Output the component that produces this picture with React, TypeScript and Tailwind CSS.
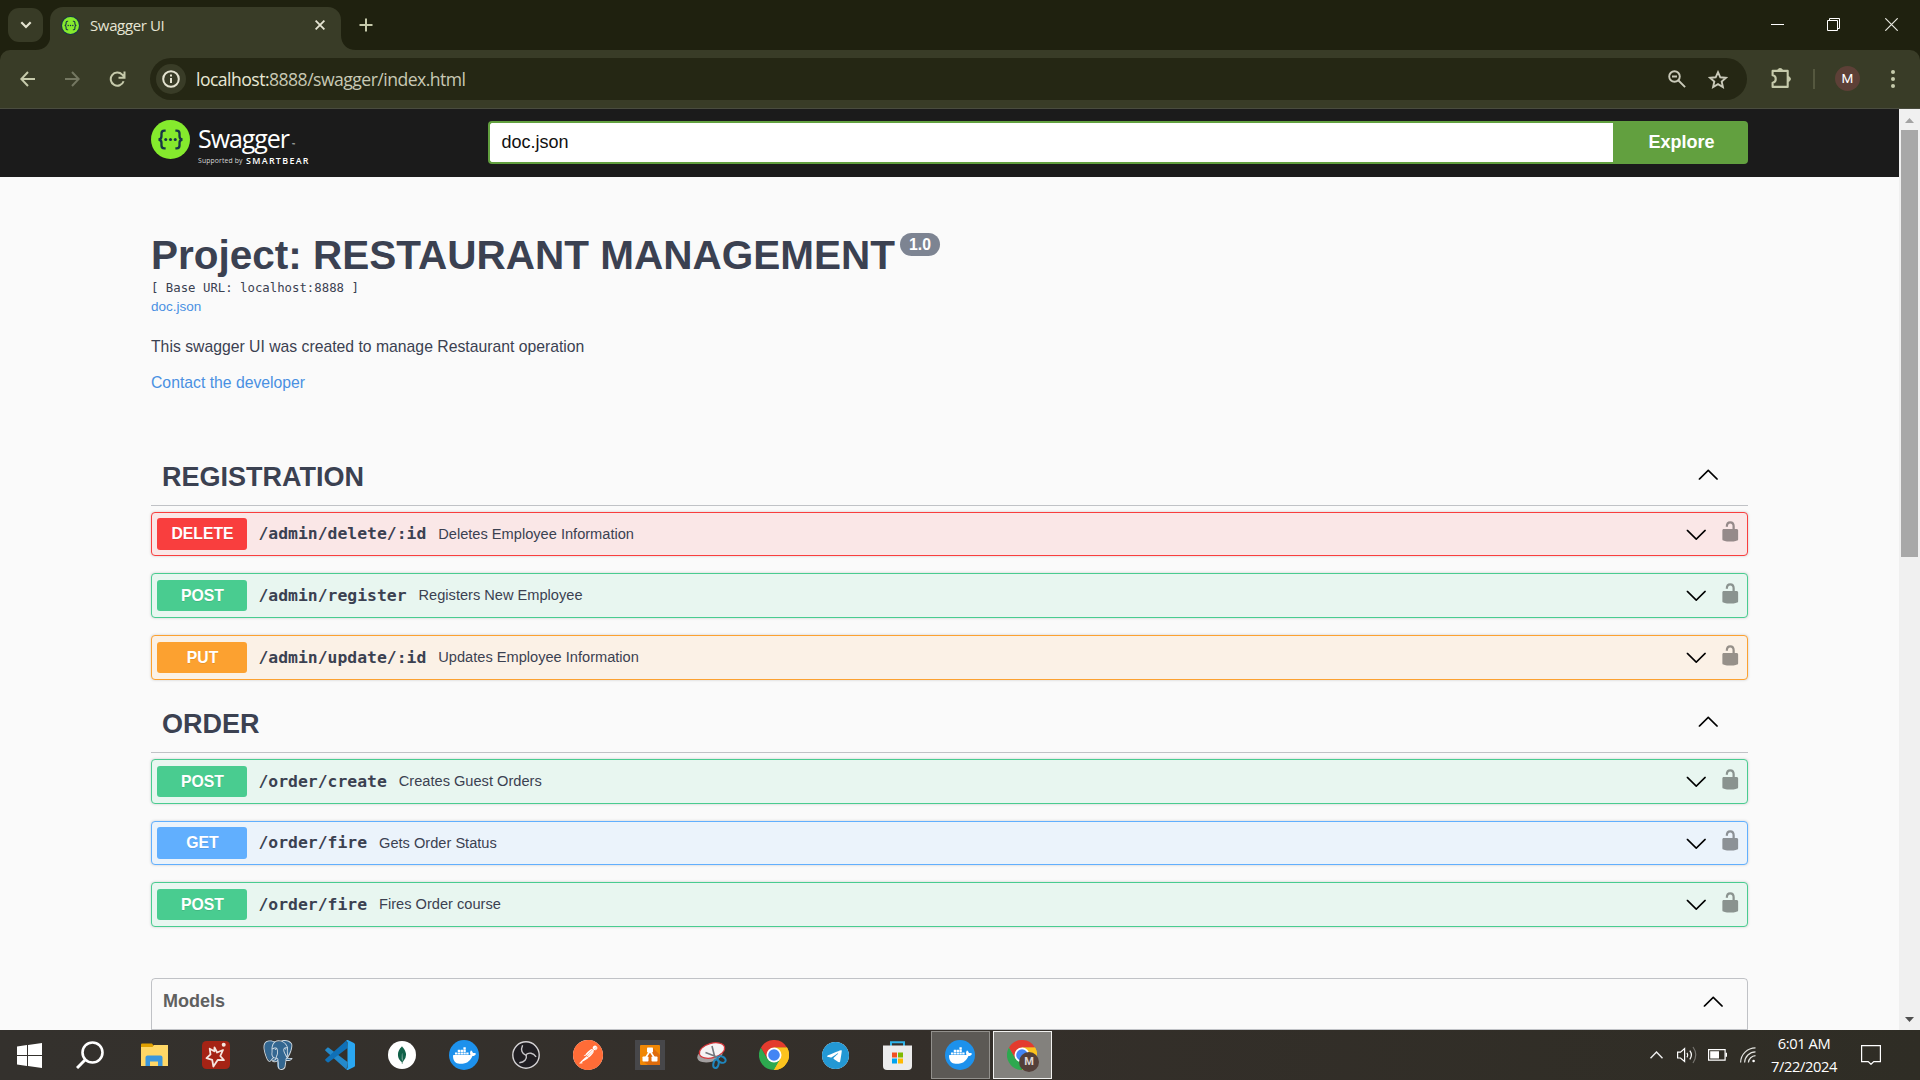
import React from "react";
import { SiPostgresql, SiMongodb, SiDocker, SiPostman, SiTelegram } from "react-icons/si";

const ARROW =
  "M17.418 6.109c.272-.268.709-.268.979 0s.271.701 0 .969l-7.908 7.83c-.27.268-.707.268-.979 0l-7.908-7.83c-.27-.268-.27-.701 0-.969s.709-.268.979 0L10 13.25l7.418-7.141z";
const UNLOCKED =
  "M15.8 8H14V5.6C14 2.703 12.665 1 10 1 7.334 1 6 2.703 6 5.6V6h2v-.801C8 3.754 8.797 3 10 3c1.203 0 2 .754 2 2.199V8H4c-.553 0-1 .646-1 1.199V17c0 .549.428 1.139.951 1.307l1.197.387C5.672 18.861 6.55 19 7.1 19h5.8c.549 0 1.428-.139 1.951-.307l1.196-.387c.524-.167.953-.757.953-1.306V9.199C17 8.646 16.352 8 15.8 8z";

function Arrow({ up = false, className = "" }: { up?: boolean; className?: string }) {
  return (
    <svg viewBox="0 0 20 20" className={`size-[22.5px] shrink-0 ${className}`}>
      <path d={ARROW} transform={up ? "rotate(180 10 10)" : undefined} />
    </svg>
  );
}

/* ---------- Browser chrome ---------- */

function Braces({ r = 32 }: { r?: number }) {
  return (
    <>
      <circle cx="32" cy="32" r={r} fill="#85ea2d" />
      <g fill="none" stroke="#173647" strokeWidth="3.8">
        <path d="M24 17.5h-2.2c-3.3 0-4.6 1.8-4.6 4.8v4.2c0 3.6-1.2 5-4.7 5.5 3.5.5 4.7 1.9 4.7 5.5v4.2c0 3 1.3 4.8 4.6 4.8H24" />
        <path d="M40 17.5h2.2c3.3 0 4.6 1.8 4.6 4.8v4.2c0 3.6 1.2 5 4.7 5.5-3.5.5-4.7 1.9-4.7 5.5v4.2c0 3-1.3 4.8-4.6 4.8H40" />
      </g>
      <g fill="#173647">
        <circle cx="24.2" cy="32" r="2.5" />
        <circle cx="32" cy="32" r="2.5" />
        <circle cx="39.8" cy="32" r="2.5" />
      </g>
    </>
  );
}

function TabStrip() {
  return (
    <div className="flex h-[50px] w-full bg-[#1f210f]">
      <div className="ml-2 mt-2 flex h-[34px] w-[35px] items-center justify-center rounded-[11px] bg-[#383b26]">
        <svg viewBox="0 0 12 8" className="h-2 w-3" fill="none" stroke="#e4e3d0" strokeWidth="2.2">
          <path d="M1.3 1.3 6 6l4.7-4.7" />
        </svg>
      </div>
      <svg viewBox="0 0 15 15" className="-mr-px mt-[35px] h-[15px] w-4 -ml-2 self-start" fill="#393c27">
        <path d="M15 0v15H0C9 15 15 9 15 0z" />
      </svg>
      <div className="mt-[7px] flex h-[43px] w-[291px] items-center rounded-t-[13px] bg-[#393c27]">
        <svg viewBox="0 0 64 64" className="-mt-[7px] ml-[10.5px] size-[19px]">
          <circle cx="32" cy="32" r="32" fill="#173647" />
          <Braces r={28.5} />
        </svg>
        <span className="-mt-[6px] ml-[10.5px] w-[225px] whitespace-nowrap font-['Open_Sans'] text-[15px] tracking-[-0.36px] text-[#e6e5d4]">
          Swagger UI
        </span>
        <svg viewBox="0 0 10 10" className="-mt-[7px] mr-[15px] size-2.5 shrink-0" stroke="#e6e5d4" strokeWidth="1.8">
          <path d="m.6.6 8.8 8.8M9.4.6.6 9.4" />
        </svg>
      </div>
      <svg viewBox="0 0 15 15" className="mt-[35px] size-[15px] self-start" fill="#393c27">
        <path d="M0 0v15h15C6 15 0 9 0 0z" />
      </svg>
      <svg viewBox="0 0 14 14" className="ml-[2.5px] mt-[18px] size-3.5" stroke="#c6caab" strokeWidth="2">
        <path d="M7 .5v13M.5 7h13" />
      </svg>
      <div className="ml-auto flex h-[50px] items-center">
        <svg viewBox="0 0 13 13" className="-mt-px mr-[43px] size-[13px]" stroke="#fff">
          <path d="M0 6.5h13" />
        </svg>
        <svg viewBox="0 0 13 13" className="-mt-px mr-[45px] size-[13px]" fill="none" stroke="#fff">
          <path d="M.5 2.5h10v10H.5zM2.5 2.5v-2h10v10h-2" />
        </svg>
        <svg viewBox="0 0 13 13" className="-mt-px mr-[22px] size-[13px]" stroke="#e8e8e0" strokeWidth="1.2">
          <path d="m.3.3 12.4 12.4M12.7.3.3 12.7" />
        </svg>
      </div>
    </div>
  );
}

function Toolbar() {
  return (
    <div className="w-full bg-[#1f210f]">
      <div className="flex h-[59px] items-start rounded-t-[10px] border-b border-[#4a4c3f] bg-[#393c27]">
        <svg viewBox="0 0 16 16" className="ml-5 mt-[21px] size-4 shrink-0" fill="none" stroke="#c6caab" strokeWidth="2">
          <path d="M15 8H2M8 1 1.3 8 8 15" />
        </svg>
        <svg viewBox="0 0 16 16" className="ml-7 mt-[21px] size-4 shrink-0" fill="none" stroke="#747761" strokeWidth="2">
          <path d="M1 8h13M8 1l6.7 7L8 15" />
        </svg>
        <svg viewBox="0 0 17 16" className="ml-[29px] mt-[21px] h-4 w-[17px] shrink-0" fill="none" stroke="#c6caab" strokeWidth="2">
          <path d="M14.6 10.2A6.6 6.6 0 1 1 13.2 3.6L15 5.5M15.5.5v6.2H9.5" />
        </svg>
        <div className="ml-6 mt-2 flex h-[42px] w-[1597px] items-center rounded-full bg-[#252714]">
          <div className="ml-1.5 flex size-[30px] items-center justify-center rounded-full bg-[#393c27]">
            <svg viewBox="0 0 18 18" className="size-[18px]" fill="none" stroke="#e4e3d0" strokeWidth="2">
              <circle cx="9" cy="9" r="7.8" />
              <path d="M9 8v5M9 4.5v2" />
            </svg>
          </div>
          <span className="ml-2.5 whitespace-nowrap font-['Open_Sans'] text-[17.6px] tracking-[-0.53px] text-[#c8c9b4]">
            <span className="text-[#e8e7d5]">localhost:</span>8888/swagger/index.html
          </span>
          <svg viewBox="0 0 18 18" className="ml-auto mr-[22px] size-[18px]" fill="none" stroke="#c9c9b9" strokeWidth="1.9">
            <circle cx="6.5" cy="6.5" r="5.3" />
            <path d="m10.5 10.5 6.6 6.6M4 6.5h5" />
          </svg>
          <svg viewBox="0 0 20 19" className="mr-[19px] h-[19px] w-5" fill="none" stroke="#c9c9b9" strokeWidth="1.9">
            <path d="m10 2.2 2.3 5.1 5.6.5-4.2 3.7 1.2 5.5L10 14.1 5.1 17l1.2-5.5-4.2-3.7 5.6-.5z" />
          </svg>
        </div>
        <svg viewBox="0 0 21 20" className="ml-6 mt-[18px] h-5 w-[21px] shrink-0">
          <path
            d="M2.3 2.9h14.4v16H1.6v-4.2c4.2-.4 4.2-6.9 0-7.4V2.9z"
            fill="none"
            stroke="#c6caab"
            strokeWidth="2.1"
            strokeLinejoin="round"
          />
          <path d="M6.6 3a2.5 2.5 0 0 1 5 0zM17.5 8.5a2.6 2.6 0 0 1 0 5z" fill="#c6caab" stroke="#c6caab" />
        </svg>
        <div className="ml-[21px] mt-[19px] h-5 w-0.5 bg-[#55583f]" />
        <div className="ml-5 mt-4 flex size-[25px] items-center justify-center rounded-full bg-[#5d4037] font-['Roboto'] text-[13.5px] text-white">
          M
        </div>
        <svg viewBox="0 0 4 18" className="ml-[30.5px] mt-5 h-[18px] w-1" fill="#c6caab">
          <circle cx="2" cy="2" r="2" />
          <circle cx="2" cy="9" r="2" />
          <circle cx="2" cy="16" r="2" />
        </svg>
      </div>
    </div>
  );
}

/* ---------- Swagger page ---------- */

function TopBar() {
  return (
    <div className="flex h-[68px] items-start bg-[#1b1b1b] pl-[151px]">
      <svg viewBox="0 0 64 64" className="mt-[11px] size-[39px] shrink-0">
        <Braces />
      </svg>
      <div className="ml-2 mt-[11px] w-[290px] whitespace-nowrap font-['Open_Sans'] text-white">
        <div className="flex h-9 items-center text-[25px] font-normal leading-9 tracking-[-1.05px]">
          Swagger<span className="ml-[3px] mt-3.5 text-[4px] leading-none tracking-normal">™</span>
        </div>
        <div className="-mt-px flex h-3 items-center">
          <span className="w-12 text-[6.8px] leading-3 tracking-[0.15px] text-[#d8d8d8]">Supported by</span>
          <span className="text-[8.9px] font-semibold leading-3 tracking-[1.32px]">SMARTBEAR</span>
        </div>
      </div>
      <div className="mt-3 flex h-[43px] w-[1125px] items-center rounded-l border-2 border-r-0 border-[#62a03f] bg-white pl-[11.5px] text-[18px] leading-none text-[#111]">
        <span className="-mt-0.5">doc.json</span>
      </div>
      <div className="mt-3 flex h-[43px] w-[135px] items-center justify-center rounded-r bg-[#62a03f] text-[18px] font-bold leading-none text-white">
        <span className="-mt-0.5 ml-0.5">Explore</span>
      </div>
    </div>
  );
}

type Op = { method: string; path: string; summary: string; box: string; badge: string };

const RED = "h-11 border-[#f93e3e] bg-[#fae7e7]";
const GREEN = "h-[45px] border-[#49cc90] bg-[#e8f6f0]";
const ORANGE = "h-[45px] border-[#fca130] bg-[#fbf1e6]";
const BLUE = "h-11 border-[#61affe] bg-[#ebf3fb]";

const REGISTRATION: Op[] = [
  { method: "DELETE", path: "/admin/delete/:id", summary: "Deletes Employee Information", box: RED, badge: "h-8 bg-[#f93e3e]" },
  { method: "POST", path: "/admin/register", summary: "Registers New Employee", box: GREEN, badge: "h-[31px] bg-[#49cc90]" },
  { method: "PUT", path: "/admin/update/:id", summary: "Updates Employee Information", box: ORANGE, badge: "h-[31px] bg-[#fca130]" },
];
const ORDER: Op[] = [
  { method: "POST", path: "/order/create", summary: "Creates Guest Orders", box: GREEN, badge: "h-[31px] bg-[#49cc90]" },
  { method: "GET", path: "/order/fire", summary: "Gets Order Status", box: BLUE, badge: "h-8 bg-[#61affe]" },
  { method: "POST", path: "/order/fire", summary: "Fires Order course", box: GREEN, badge: "h-[31px] bg-[#49cc90]" },
];

function Section({ name, ops }: { name: string; ops: Op[] }) {
  return (
    <section>
      <div className="flex h-[57px] items-center justify-between border-b border-[#3b4151]/30 pl-[11px] pr-[29px]">
        <h3 className="text-[27px] font-bold leading-none">{name}</h3>
        <Arrow up className="-mt-1" />
      </div>
      <div className="mt-1.5 flex flex-col gap-[17px]">
        {ops.map((op) => (
          <div
            key={op.method + op.path}
            className={`flex items-center rounded border pl-[5px] shadow-[0_0_3px_rgba(0,0,0,0.19)] ${op.box}`}
          >
            <div
              className={`flex w-[90px] items-center justify-center rounded-[3px] text-[15.75px] font-bold leading-none text-white [text-shadow:0_1px_0_rgba(0,0,0,0.1)] ${op.badge}`}
            >
              <span className="ml-px">{op.method}</span>
            </div>
            <span className="ml-[11.5px] mt-px font-['DejaVu_Sans_Mono'] text-[16.4px] font-bold leading-none">{op.path}</span>
            <span className="ml-3 text-[14.625px] leading-none">{op.summary}</span>
            <Arrow className="ml-auto mr-[11px]" />
            <svg viewBox="0 0 20 20" className="-mt-[5px] mr-1.5 size-[22.5px] shrink-0 opacity-40">
              <path d={UNLOCKED} />
            </svg>
          </div>
        ))}
      </div>
    </section>
  );
}

function Page() {
  return (
    <div className="flex h-[921px] w-full overflow-hidden">
      <div className="h-full w-[1899px] bg-[#fafafa]">
        <TopBar />
        <main className="mx-[151px] w-[1597px] whitespace-nowrap pt-14 text-[#3b4151]">
          <div className="flex h-[46px] items-start">
            <h2 className="-mt-px text-[40.5px] font-bold leading-[46px]">Project: RESTAURANT MANAGEMENT</h2>
            <span className="ml-[5px] flex h-[23px] w-10 items-center justify-center rounded-full bg-[#7d8492] text-[15.75px] font-bold leading-none text-white">
              1.0
            </span>
          </div>
          <div className="h-[17px] font-['DejaVu_Sans_Mono'] text-[12.33px] leading-[19px]">[ Base URL: localhost:8888 ]</div>
          <div className="h-5 text-[13.5px] leading-[21px] text-[#4990e2]">doc.json</div>
          <p className="mt-5 text-[15.75px] leading-[21px]">This swagger UI was created to manage Restaurant operation</p>
          <p className="mt-[15px] text-[15.75px] leading-[21px] text-[#4990e2]">Contact the developer</p>
          <div className="mt-14">
            <Section name="REGISTRATION" ops={REGISTRATION} />
          </div>
          <div className="mt-4">
            <Section name="ORDER" ops={ORDER} />
          </div>
          <div className="mt-[51px] h-20 rounded border border-[#3b4151]/30">
            <div className="flex h-[51px] items-center justify-between border-b border-[#3b4151]/30 pb-1 pl-[11px] pr-[23px]">
              <h4 className="-mt-0.5 text-[18px] font-bold leading-none text-[#606060]">Models</h4>
              <Arrow up />
            </div>
          </div>
        </main>
      </div>
      <div className="flex h-full w-[21px] flex-col items-center bg-[#f0f0f0]">
        <svg viewBox="0 0 9 5" className="mt-[9px] h-[5px] w-[9px]" fill="#a3a3a3">
          <path d="M0 5 4.5 0 9 5z" />
        </svg>
        <div className="mt-[7px] h-[427px] w-[17px] bg-[#a8a8a8]" />
        <svg viewBox="0 0 9 5" className="mb-2 mt-auto h-[5px] w-[9px]" fill="#505050">
          <path d="M0 0h9L4.5 5z" />
        </svg>
      </div>
    </div>
  );
}

/* ---------- Taskbar ---------- */

function Docker() {
  return (
    <div className="flex size-[30px] items-center justify-center rounded-full bg-[#1d91ec] text-white">
      <SiDocker className="size-[23px]" />
    </div>
  );
}

function Chrome() {
  return (
    <svg viewBox="0 0 48 48" className="size-[30px]">
      <path d="M24 24V12h20.8A24 24 0 0 1 24 48z" fill="#fcc31e" />
      <path d="M3.2 12A24 24 0 0 0 24 48l10.4-18L24 24l-10.4 6z" fill="#2da94f" />
      <path d="M3.2 12A24 24 0 0 1 44.8 12H24v12l-10.4 6z" fill="#e33b2e" />
      <path d="M34.4 30 24 48a24 24 0 0 0 20.8-36H24z" fill="#fcc31e" />
      <circle cx="24" cy="24" r="12" fill="#fff" />
      <circle cx="24" cy="24" r="9.3" fill="#4285f4" />
    </svg>
  );
}

const APPS: { id: string; icon: React.ReactNode }[] = [
  {
    id: "explorer",
    icon: (
      <svg viewBox="0 0 27 24" className="h-6 w-[27px]">
        <path d="M0 1.5Q0 .5 1 .5h10l1.5 2H27V10H0z" fill="#e0a000" />
        <path d="M0 4h11.5L13 2h14v21H0z" fill="#ffd766" />
        <path d="M4.5 23V14.5a2 2 0 0 1 2-2h13a2 2 0 0 1 2 2V23H17v-4.5H9V23z" fill="#3b97dd" />
      </svg>
    ),
  },
  {
    id: "star",
    icon: (
      <svg viewBox="0 0 28 28" className="size-7">
        <rect width="28" height="28" rx="4.5" fill="#a52315" />
        <path
          d="m12.5 6.5 2.6 5 5.9-2.5-2.7 6 3.6 4.2-6.2-.2-4.3 6.5-1.2-6.7-5.7-1.6 4-3.9-.8-5.6 4.6 2.5z"
          fill="none"
          stroke="#f5e6e0"
          strokeWidth="1.8"
          strokeLinejoin="round"
        />
        <circle cx="21.7" cy="3.7" r="2" fill="#f5e6e0" />
      </svg>
    ),
  },
  {
    id: "postgres",
    icon: (
      <svg viewBox="0 0 24 24" className="size-[30px]">
        <path
          d="M5 .8c3-.4 4.5.4 5.5.9C12 1 13.5.8 15 1.2c3-1 6.5-.6 7.7 1.8.9 2.4-.8 7.5-3.2 11 1.2.6 2.6.3 3.7.4-.6 1.5-3 2.2-5.3 1.9-.2 2 .2 6.2-3.4 6.7-3.3.4-3.3-2.5-3.4-6.2-1.6.2-3.5 0-3.6-1C5.5 18 3.8 15.5 2.7 12.5 1.5 9.5.6 5.5 1.2 3.3 1.7 1.8 3 1 5 .8z"
          fill="#336791"
        />
        <SiPostgresql size={24} className="text-[#cfdbe4]" />
      </svg>
    ),
  },
  {
    id: "vscode",
    icon: (
      <svg viewBox="0 0 100 100" className="size-[30px]">
        <path d="M1.3 36 72 99.5 75 73 12.4 26.2c-1.7-1.3-4-1.2-5.6.2l-5.5 5c-1.3 1.3-1.3 3.5 0 4.6z" fill="#2489ca" />
        <path d="M1.3 64 72 .5 75 27 12.4 73.8c-1.7 1.3-4 1.2-5.6-.2l-5.5-5c-1.3-1.3-1.3-3.5 0-4.6z" fill="#0f70b7" />
        <path d="M72 99.3c2 .8 4 .8 6-.1l18.5-9c2-1 3.5-3 3.5-5.5V15.3c0-2.4-1.4-4.5-3.5-5.6L78 .8c-2.3-1-5-.7-7 1.1l2 3c0 0 2 1 2 3v84c0 2-2 5-3 7.4z" fill="#2aa7f2" />
      </svg>
    ),
  },
  {
    id: "mongo",
    icon: (
      <div className="flex size-7 items-center justify-center rounded-full bg-white text-[#116149]">
        <SiMongodb className="size-[18px]" />
      </div>
    ),
  },
  { id: "docker", icon: <Docker /> },
  {
    id: "obs",
    icon: (
      <svg viewBox="0 0 28 28" className="size-7">
        <circle cx="14" cy="14" r="13.2" fill="#201e22" stroke="#d4d2d4" strokeWidth="1.4" />
        <g fill="none" stroke="#c9c7ca" strokeWidth="1.4">
          <path d="M14 14.3c-4-1.3-5.6-5.3-3.4-10" />
          <path d="M14 14.3c-4-1.3-5.6-5.3-3.4-10" transform="rotate(120 14 14)" />
          <path d="M14 14.3c-4-1.3-5.6-5.3-3.4-10" transform="rotate(240 14 14)" />
        </g>
      </svg>
    ),
  },
  {
    id: "postman",
    icon: (
      <div className="flex size-[30px] items-center justify-center rounded-full bg-white">
        <SiPostman className="size-[30px] shrink-0 text-[#ff6c37]" />
      </div>
    ),
  },
  {
    id: "drawio",
    icon: (
      <div className="flex size-[30px] items-center justify-center bg-[#47474a]">
        <svg viewBox="0 0 20 20" className="size-5">
          <rect width="20" height="20" rx="1" fill="#f08705" />
          <path d="m13 3 7 7v10H8l-5-4z" fill="#df6c0c" />
          <path d="M10 6 5.5 13M10 6l4.5 7" stroke="#fff" strokeWidth="1.6" />
          <g fill="#fff">
            <rect x="7" y="2.5" width="6" height="5" rx=".8" />
            <rect x="2.5" y="11.5" width="6" height="5" rx=".8" />
            <rect x="11.5" y="11.5" width="6" height="5" rx=".8" />
          </g>
        </svg>
      </div>
    ),
  },
  {
    id: "snip",
    icon: (
      <svg viewBox="0 0 30 28" className="h-7 w-[30px]">
        <ellipse cx="13" cy="14" rx="13" ry="7" transform="rotate(-14 13 14)" fill="#a39f9f" />
        <ellipse cx="15" cy="9.5" rx="13" ry="7.2" transform="rotate(-16 15 9.5)" fill="#f6f4f4" stroke="#d6363a" strokeWidth="1.2" />
        <path d="m15 5 3 12M8.5 11.5 20 16" stroke="#73777c" strokeWidth="1.6" />
        <g fill="none" stroke="#1f86bd" strokeWidth="2">
          <ellipse cx="24.5" cy="18.5" rx="4.3" ry="3" transform="rotate(25 24.5 18.5)" />
          <ellipse cx="19" cy="22.8" rx="2.6" ry="4.3" transform="rotate(12 19 22.8)" />
        </g>
      </svg>
    ),
  },
  { id: "chrome", icon: <Chrome /> },
  {
    id: "telegram",
    icon: (
      <div className="-ml-0.5 flex size-[27px] items-center justify-center rounded-full bg-white">
        <SiTelegram className="size-[27px] shrink-0 text-[#2398d4]" />
      </div>
    ),
  },
  {
    id: "store",
    icon: (
      <svg viewBox="0 0 29 29" className="-ml-0.5 size-[29px]">
        <path d="M8 6V1.2h13V6" fill="none" stroke="#2fb4ea" strokeWidth="2" />
        <path d="M0 4.5h29V25a4 4 0 0 1-4 4H4a4 4 0 0 1-4-4z" fill="#ececec" />
        <path d="M9 11.5h5v5H9z" fill="#f25022" />
        <path d="M15 11.5h5v5h-5z" fill="#7fba00" />
        <path d="M9 17.5h5v5H9z" fill="#00a4ef" />
        <path d="M15 17.5h5v5h-5z" fill="#ffb900" />
      </svg>
    ),
  },
];

function Taskbar() {
  return (
    <div className="flex h-[50px] w-full items-center bg-gradient-to-r from-[#34312d] via-[#342f2a] to-[#2f2d25] text-white">
      <div className="flex w-[59px] justify-center">
        <svg viewBox="0 0 25 25" className="size-[25px]" fill="#fff">
          <path d="M0 3.5 10 2v10H0zM11 1.9 25 0v12H11zM0 13h10v10L0 21.5zM11 13h14v12l-14-1.9z" />
        </svg>
      </div>
      <div className="flex w-16 justify-center pr-[3px]">
        <svg viewBox="0 0 28 28" className="size-7" fill="none" stroke="#fff" strokeWidth="2.6">
          <circle cx="16.5" cy="11.5" r="10" />
          <path d="m9.5 18.5-8.5 8.5" strokeWidth="3" />
        </svg>
      </div>
      {APPS.map((a) => (
        <div key={a.id} className="flex w-[62px] justify-center">
          {a.icon}
        </div>
      ))}
      <div className="flex w-[62px] justify-center">
        <div className="flex h-12 w-[59px] items-center justify-center border border-[#92908c] bg-[#5c5955]">
          <Docker />
        </div>
      </div>
      <div className="flex w-[62px] justify-center">
        <div className="flex h-12 w-[59px] items-center justify-center border border-[#f2f2f0] bg-[#83817d]">
          <div className="relative">
            <Chrome />
            <span className="absolute left-3 top-3 flex size-5 items-center justify-center rounded-full bg-[#54403a] font-['Roboto'] text-[11px] font-bold text-[#ddd6d3]">
              M
            </span>
          </div>
        </div>
      </div>
      <div className="ml-auto flex items-center font-['Open_Sans']">
        <svg viewBox="0 0 13 8" className="mr-3.5 h-2 w-[13px]" fill="none" stroke="#eee" strokeWidth="1.4">
          <path d="M.5 7.3 6.5 1l6 6.3" />
        </svg>
        <svg viewBox="0 0 20 18" className="mr-[11px] h-[18px] w-5" fill="none" stroke="#fff" strokeWidth="1.2">
          <path d="M.6 6.2h2.9L7.6 2.5v13L3.5 12H.6z" />
          <path d="M10 6.8q1.5 2.2 0 4.5M12.8 4.7q3.2 4.3 0 8.7" />
          <path d="M16 1q5.5 7.5 0 16" stroke="#777570" />
        </svg>
        <svg viewBox="0 0 19 12" className="mr-[13px] h-3 w-[19px]">
          <path d="M.6.6h16.5v10.5H.6z" fill="none" stroke="#fff" strokeWidth="1.2" />
          <path d="M2.2 2.3H11v7.3H2.2zM17.5 3.8H19v4h-1.5z" fill="#fff" />
        </svg>
        <svg viewBox="0 0 16 16" className="mr-3.5 size-4" fill="none" stroke="#e4e4e0" strokeWidth="1.2">
          <path d="M.6 15.5A15 15 0 0 1 15.5.8M4.6 15.5A11 11 0 0 1 15.5 4.8M8.4 15.5a7.5 7.500 0 0 1 7.100-6.900" />
          <circle cx="13.6" cy="14" r="1.3" fill="#fff" stroke="none" />
        </svg>
        <div className="flex w-[68px] flex-col items-center whitespace-nowrap text-[14.7px] leading-[23px] tracking-[-0.4px]">
          <span>6:01 AM</span>
          <span>7/22/2024</span>
        </div>
        <svg viewBox="0 0 20 20" className="ml-[23px] mr-[39px] size-5" fill="none" stroke="#fff" strokeWidth="1.2">
          <path d="M.6.6h18.8v16h-6.6L10 19.3l-2.8-2.7H.6z" />
        </svg>
      </div>
    </div>
  );
}

export default function App() {
  return (
    <div className="flex h-[1080px] w-[1920px] flex-col overflow-hidden font-['Liberation_Sans',Arial,sans-serif]">
      <TabStrip />
      <Toolbar />
      <Page />
      <Taskbar />
    </div>
  );
}
